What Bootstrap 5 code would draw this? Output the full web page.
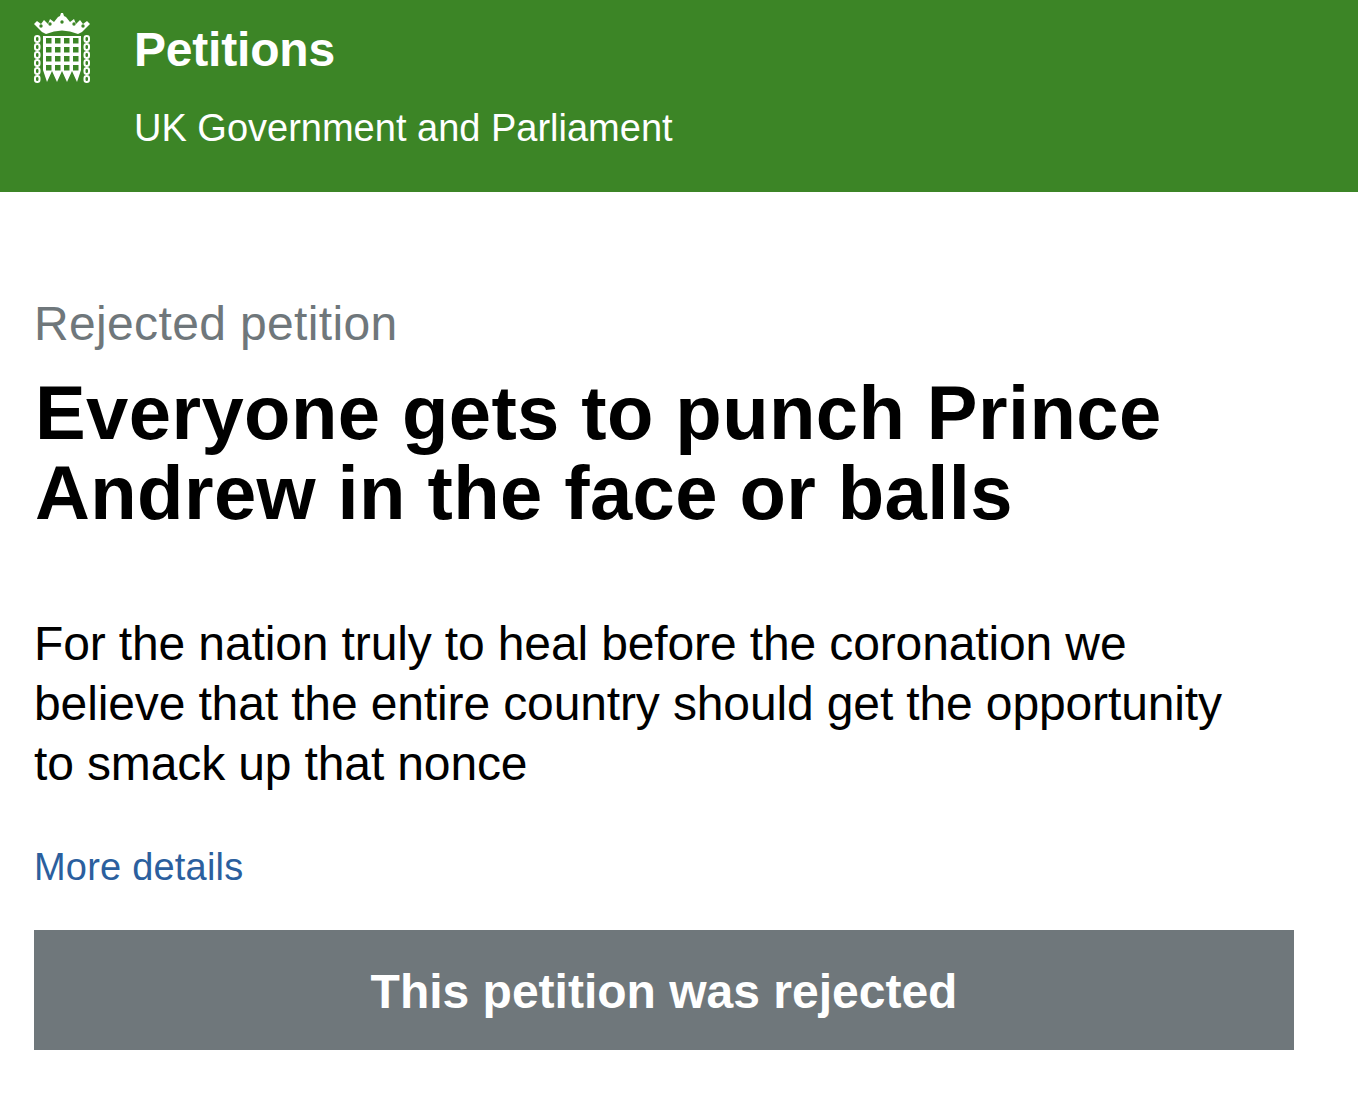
<!DOCTYPE html>
<html lang="en"><head><meta charset="utf-8"><title>Petitions</title>
<link href="https://cdn.jsdelivr.net/npm/bootstrap@5.3.0/dist/css/bootstrap.min.css" rel="stylesheet">
<style>
body{font-family:"Liberation Sans",Arial,sans-serif;color:#0b0c0c;background:#fff}
.hdr{background:#3c8526;height:192px;padding-left:34px;color:#fff}
.crest{width:56px;height:70px;margin-top:13px;margin-right:44px;flex:none}
.hdr-t{font-size:48px;font-weight:700;line-height:54px;margin-top:23px;letter-spacing:-.2px}
.hdr-s{font-size:38px;line-height:44px;margin-top:29px}
.pg{padding:104px 64px 0 34px}
.kick{font-size:48px;line-height:56px;color:#6f777b;letter-spacing:.35px}
.ttl{font-size:76px;font-weight:700;line-height:80px;color:#000;margin:21px 0 0;padding-left:1px;letter-spacing:.4px}
.desc{font-size:48px;line-height:60px;color:#000;margin:81px 0 0;max-width:1200px;letter-spacing:-.13px}
.more{font-size:38px;line-height:44px;color:#2b5f9e;text-decoration:none;display:inline-block;margin-top:51px;letter-spacing:.2px}
.rej{background:#6f777b;color:#fff;font-size:48px;font-weight:700;height:120px;margin-top:41px;padding-top:4px}
</style></head><body>
<header class="hdr d-flex">
<svg class="crest" viewBox="0 0 56 70">
<path fill="#fff" d="M8 19 L0 11 L3 8 L7 11 L10 7 L14 11 L16 6 L20 9 L24 4 L26 3 L27 0 L29 0 L30 3 L32 4 L36 9 L40 6 L42 11 L46 7 L49 11 L53 8 L56 11 L48 19 L44 21 Q28 14 12 21Z"/>
<g fill="#3c8526"><circle cx="7" cy="13" r="1.7"/><circle cx="16" cy="11" r="1.7"/><circle cx="28" cy="9" r="1.7"/><circle cx="40" cy="11" r="1.7"/><circle cx="49" cy="13" r="1.7"/></g>
<path fill="#fff" d="M9 23H47V57L43 69L38 58L33 69L28 58L23 69L18 58L13 69L9 57Z"/>
<g fill="#3c8526">
<rect x="12" y="25" width="5.5" height="5.5"/><rect x="21" y="25" width="5.5" height="5.5"/><rect x="30" y="25" width="5.5" height="5.5"/><rect x="39" y="25" width="5.5" height="5.5"/>
<rect x="12" y="34" width="5.5" height="5.5"/><rect x="21" y="34" width="5.5" height="5.5"/><rect x="30" y="34" width="5.5" height="5.5"/><rect x="39" y="34" width="5.5" height="5.5"/>
<rect x="12" y="43" width="5.5" height="5.5"/><rect x="21" y="43" width="5.5" height="5.5"/><rect x="30" y="43" width="5.5" height="5.5"/><rect x="39" y="43" width="5.5" height="5.5"/>
<rect x="12" y="52" width="5.5" height="5.5"/><rect x="21" y="52" width="5.5" height="5.5"/><rect x="30" y="52" width="5.5" height="5.5"/><rect x="39" y="52" width="5.5" height="5.5"/>
</g>
<g fill="none" stroke="#fff" stroke-width="2"><rect x="1" y="23" width="4.5" height="6" rx="2.2"/><rect x="1" y="31" width="4.5" height="6" rx="2.2"/><rect x="1" y="39" width="4.5" height="6" rx="2.2"/><rect x="1" y="47" width="4.5" height="6" rx="2.2"/><rect x="1" y="55" width="4.5" height="6" rx="2.2"/><rect x="1" y="63" width="4.5" height="6" rx="2.2"/><rect x="50.5" y="23" width="4.5" height="6" rx="2.2"/><rect x="50.5" y="31" width="4.5" height="6" rx="2.2"/><rect x="50.5" y="39" width="4.5" height="6" rx="2.2"/><rect x="50.5" y="47" width="4.5" height="6" rx="2.2"/><rect x="50.5" y="55" width="4.5" height="6" rx="2.2"/><rect x="50.5" y="63" width="4.5" height="6" rx="2.2"/></g>
</svg>
<div><div class="hdr-t">Petitions</div><div class="hdr-s">UK Government and Parliament</div></div>
</header>
<main class="pg">
<div class="kick">Rejected petition</div>
<h1 class="ttl">Everyone gets to punch Prince Andrew in the face or balls</h1>
<p class="desc">For the nation truly to heal before the coronation we believe that the entire country should get the opportunity to smack up that nonce</p>
<a class="more" href="#">More details</a>
<div class="rej d-flex align-items-center justify-content-center">This petition was rejected</div>
</main>
</body></html>
